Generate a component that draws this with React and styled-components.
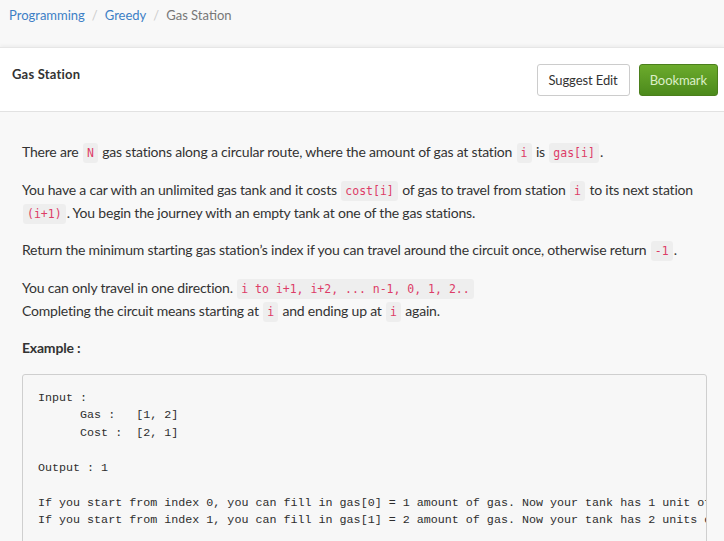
import React from 'react';
import styled, { createGlobalStyle } from 'styled-components';

const GlobalStyle = createGlobalStyle`
  html, body {
    margin: 0;
    padding: 0;
    background: #f8f8f8;
    font-family: Lato, "Open Sans", sans-serif;
    color: #333;
  }
`;

const Page = styled.div`
  width: 724px;
  height: 541px;
  overflow: hidden;
`;

const Crumbs = styled.nav`
  display: flex;
  align-items: center;
  height: 29px;
  padding: 0 9px;
  font-size: 13px;
  margin-bottom: 18px;
`;

const CrumbLink = styled.a`
  color: #3d7fc6;
  text-decoration: none;
`;

const Sep = styled.span`
  color: #ccc;
  padding: 0 7px;
`;

const CrumbCurrent = styled.span`
  color: #777;
`;

const Header = styled.header`
  display: flex;
  justify-content: space-between;
  align-items: flex-start;
  background: #fff;
  border-top: 1px solid #e6e6e6;
  border-bottom: 1px solid #e2e2e2;
  box-shadow: 0 -2px 3px rgba(0, 0, 0, 0.04);
  padding: 16px 6px 15px 12px;
`;

const Title = styled.h1`
  margin: 2px 0 0;
  font-size: 13px;
  font-weight: 700;
  color: #333;
  letter-spacing: 0.2px;
`;

const Actions = styled.div`
  display: flex;
  gap: 9px;
`;

const Button = styled.button`
  height: 32px;
  padding: 0 ${p => (p.$primary ? '10px' : '11px')};
  border-radius: 3px;
  font-family: Lato, "Open Sans", sans-serif;
  font-size: 13px;
  letter-spacing: -0.1px;
  cursor: pointer;
  border: 1px solid ${p => (p.$primary ? '#4b7f1c' : '#ccc')};
  color: ${p => (p.$primary ? '#dcefc8' : '#333')};
  background: ${p => (p.$primary ? 'linear-gradient(#6cab2c, #4c8a1c)' : '#fff')};
`;

const Content = styled.main`
  padding: 28px 17px 0 22px;
  font-size: 14px;
  line-height: 23px;
  letter-spacing: -0.2px;
  color: #333;
`;

const P = styled.p`
  margin: 0 0 14.5px;
`;

const Code = styled.code`
  font-family: "DejaVu Sans Mono", "Liberation Mono", monospace;
  font-size: 11.5px;
  line-height: 1;
  letter-spacing: 0;
  color: #dd3c67;
  background: #eeeeee;
  border-radius: 3px;
  padding: 3px 4px;
  margin: 0 1px;
`;

const Heading = styled.p`
  margin: 0 0 14.5px;
  font-weight: 700;
`;

const Pre = styled.pre`
  margin: 0;
  border: 1px solid #cfcfcf;
  border-radius: 3px;
  background: #f7f7f7;
  padding: 15px 15px 20px;
  font-family: "Liberation Mono", "DejaVu Sans Mono", monospace;
  font-size: 11.7px;
  line-height: 17.5px;
  letter-spacing: 0;
  color: #2e2e2e;
  overflow: hidden;
  white-space: pre;
`;

const example = `Input :
      Gas :   [1, 2]
      Cost :  [2, 1]

Output : 1

If you start from index 0, you can fill in gas[0] = 1 amount of gas. Now your tank has 1 unit of gas. But you need cost[0] = 2 to travel to station 1.
If you start from index 1, you can fill in gas[1] = 2 amount of gas. Now your tank has 2 units of gas. You need cost[1] = 1 to travel to station 0.`;

export default function App() {
  return (
    <Page>
      <GlobalStyle />
      <Crumbs>
        <CrumbLink href="#">Programming</CrumbLink>
        <Sep>/</Sep>
        <CrumbLink href="#">Greedy</CrumbLink>
        <Sep>/</Sep>
        <CrumbCurrent>Gas Station</CrumbCurrent>
      </Crumbs>
      <Header>
        <Title>Gas Station</Title>
        <Actions>
          <Button>Suggest Edit</Button>
          <Button $primary>Bookmark</Button>
        </Actions>
      </Header>
      <Content>
        <P>
          There are <Code>N</Code> gas stations along a circular route, where the amount of gas at station <Code>i</Code> is <Code>gas[i]</Code>.
        </P>
        <P>
          You have a car with an unlimited gas tank and it costs <Code>cost[i]</Code> of gas to travel from station <Code>i</Code> to its next station <Code>(i+1)</Code>. You begin the journey with an empty tank at one of the gas stations.
        </P>
        <P>
          Return the minimum starting gas station’s index if you can travel around the circuit once, otherwise return <Code>-1</Code>.
        </P>
        <P>
          You can only travel in one direction. <Code>i to i+1, i+2, ... n-1, 0, 1, 2..</Code>
          <br />
          Completing the circuit means starting at <Code>i</Code> and ending up at <Code>i</Code> again.
        </P>
        <Heading>Example :</Heading>
        <Pre>{example}</Pre>
      </Content>
    </Page>
  );
}
